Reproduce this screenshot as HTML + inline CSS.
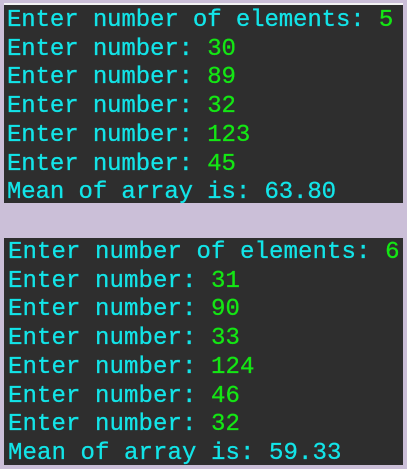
<!DOCTYPE html>
<html><head><style>
html,body{margin:0;padding:0;width:407px;height:469px;background:#cbbfd8;overflow:hidden}
.p{position:absolute;left:4px;width:399px;background:#2e2e2e;font-family:"Liberation Mono",monospace;font-size:24px;line-height:28.7px;color:#13e4e8;white-space:pre;letter-spacing:-0.1px;-webkit-text-stroke:0.3px}
.g{color:#14e614}
</style></head><body>
<div style="position:absolute;left:4px;top:3px;width:399px;height:2px;background:#f4f4f4"></div>
<div class="p" style="top:5px;height:198px;padding-left:3px;padding-top:2px;box-sizing:border-box">Enter number of elements: <span class="g">5</span>
Enter number: <span class="g">30</span>
Enter number: <span class="g">89</span>
Enter number: <span class="g">32</span>
Enter number: <span class="g">123</span>
Enter number: <span class="g">45</span>
Mean of array is: 63.80</div>
<div class="p" style="top:238px;height:227px;padding-left:4px;padding-top:1px;box-sizing:border-box;letter-spacing:0.1px">Enter number of elements: <span class="g">6</span>
Enter number: <span class="g">31</span>
Enter number: <span class="g">90</span>
Enter number: <span class="g">33</span>
Enter number: <span class="g">124</span>
Enter number: <span class="g">46</span>
Enter number: <span class="g">32</span>
Mean of array is: 59.33</div>
</body></html>
